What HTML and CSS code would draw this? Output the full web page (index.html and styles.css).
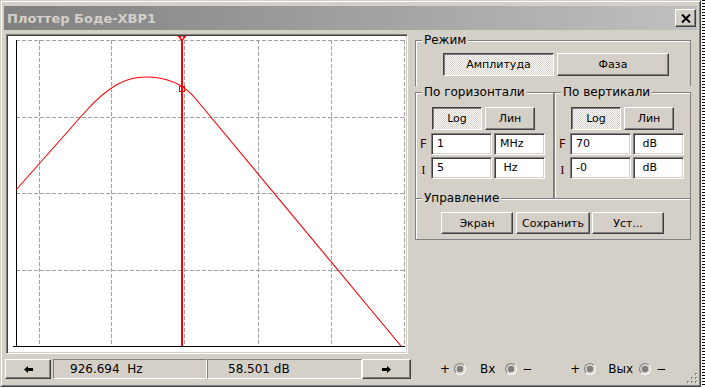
FILE: index.html
```html
<!DOCTYPE html>
<html lang="ru">

<head>
  <meta charset="UTF-8">
  <title>Плоттер Боде-XBP1</title>
  <link rel="stylesheet" href="styles.css">
</head>

<body>
  <div class="window">
    <div class="titlebar">
      <span class="title">Плоттер Боде-XBP1</span>
      <button class="close" type="button" aria-label="Закрыть">
        <svg width="10" height="9" viewBox="0 0 10 9"><path d="M1 0.5 L9 8.5 M9 0.5 L1 8.5" stroke="#000" stroke-width="2"/></svg>
      </button>
    </div>

    <div class="content">
      <div class="left">
        <!-- график АЧХ -->
        <div class="plot">
          <svg class="chart" viewBox="8 36 398 316" width="398" height="316">
            <g class="grid">
              <line x1="16" y1="40.5" x2="405" y2="40.5"/>
              <line x1="16" y1="117.5" x2="405" y2="117.5"/>
              <line x1="16" y1="193.5" x2="405" y2="193.5"/>
              <line x1="16" y1="270.5" x2="405" y2="270.5"/>
              <line x1="39.5" y1="40" x2="39.5" y2="346"/>
              <line x1="111.5" y1="40" x2="111.5" y2="346"/>
              <line x1="184.5" y1="40" x2="184.5" y2="346"/>
              <line x1="258.5" y1="40" x2="258.5" y2="346"/>
              <line x1="331.5" y1="40" x2="331.5" y2="346"/>
              <line x1="404.5" y1="40" x2="404.5" y2="346"/>
            </g>
            <path class="axis" d="M16.5 40 V347 M13 346.5 H405"/>
            <path class="curve" d="M16 190 L85 112 C110 84 128 77 145 77 C162 77 181 81 195 98 L401 346"/>
            <line class="cursor" x1="182" y1="36" x2="182" y2="346"/>
            <polygon class="marker" points="177.5,36 186.5,36 182,41.5"/>
            <circle cx="182" cy="37.5" r="1.3" fill="#fff"/>
            <rect class="probe" x="179.5" y="86.5" width="5" height="5"/>
          </svg>
        </div>

        <div class="readout">
          <button class="btn arrow arrow-left" type="button">
            <svg width="9" height="7" viewBox="0 0 9 7"><path d="M0 3.5 L4 0 V2 H9 V5 H4 V7 Z"/></svg>
          </button>
          <div class="field field-freq">926.694  Hz</div>
          <div class="field field-gain">58.501 dB</div>
          <button class="btn arrow arrow-right" type="button">
            <svg width="9" height="7" viewBox="0 0 9 7"><path d="M9 3.5 L5 0 V2 H0 V5 H5 V7 Z"/></svg>
          </button>
        </div>
      </div>

      <div class="right">
        <fieldset class="group mode">
          <legend>Режим</legend>
          <div class="btnrow">
            <button class="btn pressed wide" type="button">Амплитуда</button>
            <button class="btn wide wide-2" type="button">Фаза</button>
          </div>
        </fieldset>

        <div class="axes">
          <fieldset class="group axis-group axis-h">
            <legend>По горизонтали</legend>
            <div class="toggles">
              <button class="btn pressed small" type="button">Log</button>
              <button class="btn small" type="button">Лин</button>
            </div>
            <div class="row">
              <span class="tag">F</span>
              <input class="num" type="text" value="1">
              <input class="unit" type="text" value="MHz">
            </div>
            <div class="row row-2">
              <span class="tag tag-i">I</span>
              <input class="num" type="text" value="5">
              <input class="unit" type="text" value=" Hz">
            </div>
          </fieldset>

          <fieldset class="group axis-group axis-v">
            <legend>По вертикали</legend>
            <div class="toggles">
              <button class="btn pressed small" type="button">Log</button>
              <button class="btn small" type="button">Лин</button>
            </div>
            <div class="row">
              <span class="tag">F</span>
              <input class="num" type="text" value="70">
              <input class="unit" type="text" value=" dB">
            </div>
            <div class="row row-2">
              <span class="tag tag-i">I</span>
              <input class="num" type="text" value="-0">
              <input class="unit" type="text" value=" dB">
            </div>
          </fieldset>
        </div>

        <fieldset class="group control">
          <legend>Управление</legend>
          <div class="btnrow">
            <button class="btn ctl" type="button">Экран</button>
            <button class="btn ctl ctl-save" type="button">Сохранить</button>
            <button class="btn ctl ctl-set" type="button">Уст...</button>
          </div>
        </fieldset>

        <div class="terminals">
          <div class="term term-in">
            <span class="sign">+</span>
            <span class="radio"></span>
            <span class="tname">Вх</span>
            <span class="radio"></span>
            <span class="sign">−</span>
          </div>
          <div class="term term-out">
            <span class="sign">+</span>
            <span class="radio"></span>
            <span class="tname">Вых</span>
            <span class="radio"></span>
            <span class="sign">−</span>
          </div>
        </div>
      </div>
    </div>

    <svg class="grip" width="11" height="11" viewBox="0 0 11 11">
      <g fill="#808080">
        <rect x="8" y="0" width="2" height="2"/>
        <rect x="4" y="4" width="2" height="2"/>
        <rect x="8" y="4" width="2" height="2"/>
        <rect x="0" y="8" width="2" height="2"/>
        <rect x="4" y="8" width="2" height="2"/>
        <rect x="8" y="8" width="2" height="2"/>
      </g>
      <g fill="#fff">
        <rect x="9" y="1" width="1" height="1"/>
        <rect x="5" y="5" width="1" height="1"/>
        <rect x="9" y="5" width="1" height="1"/>
        <rect x="1" y="9" width="1" height="1"/>
        <rect x="5" y="9" width="1" height="1"/>
        <rect x="9" y="9" width="1" height="1"/>
      </g>
    </svg>
  </div>
</body>

</html>
```

FILE: styles.css
```css
* {
  box-sizing: border-box;
}

body {
  margin: 0;
  font-family: 'DejaVu Sans', sans-serif;
  font-size: 11px;
  color: #000;
  background: repeating-linear-gradient(#000 0 1px, #fff 1px 3px) right top / 3px 100% no-repeat, #fff;
}

button,
input {
  font: inherit;
  color: inherit;
}

/* Окно */
.window {
  position: relative;
  width: 701px;
  height: 387px;
  padding: 5px 3px 0 3px;
  display: flex;
  flex-direction: column;
  background-color: #d4d0c8;
  border: 1px solid;
  border-color: #d4d0c8 #404040 #404040 #d4d0c8;
  box-shadow: inset 1px 1px #fff, inset -1px -1px #808080;
}

.titlebar {
  height: 24px;
  flex: none;
  display: flex;
  align-items: center;
  justify-content: space-between;
  padding: 0 1px 0 3px;
  background: linear-gradient(to right, #808080, #c0c0c0);
}

.title {
  color: #d4d0c8;
  font-weight: bold;
  font-size: 13px;
}

.close {
  width: 21px;
  height: 18px;
  padding: 0;
  display: flex;
  align-items: center;
  justify-content: center;
  background-color: #d4d0c8;
  border: 1px solid;
  border-color: #fff #404040 #404040 #fff;
  box-shadow: inset -1px -1px #808080;
}

.content {
  flex: 1;
  display: flex;
  padding: 4px 0 0 1px;
}

/* Левая часть: график */
.left {
  width: 406px;
  flex: none;
}

.plot {
  margin-left: 1px;
  width: 402px;
  height: 320px;
  padding: 1px;
  background-color: #fff;
  border: 1px solid;
  border-color: #808080 #fff #fff #808080;
  box-shadow: inset 1px 1px #404040, inset -1px -1px #d4d0c8;
}

.chart {
  display: block;
}

.grid line {
  stroke: #a0a0a0;
  stroke-width: 1;
  stroke-dasharray: 4 2;
}

.axis {
  fill: none;
  stroke: #000;
  stroke-width: 1;
}

.curve {
  fill: none;
  stroke: #f00;
  stroke-width: 1.1;
}

.cursor {
  stroke: #f00;
  stroke-width: 2;
}

.marker {
  fill: #f00;
}

.probe {
  fill: none;
  stroke: #f00;
  stroke-width: 1;
}

.readout {
  margin-top: 5px;
  height: 20px;
  display: flex;
}

.field {
  height: 20px;
  line-height: 18px;
  font-size: 12px;
  white-space: pre;
  border: 1px solid;
  border-color: #808080 #fff #fff #808080;
}

.field-freq {
  width: 154px;
  margin-left: 2px;
  padding-left: 16px;
}

.field-gain {
  width: 155px;
  padding-left: 20px;
}

/* Кнопки */
.btn {
  padding: 0;
  background-color: #d4d0c8;
  border: 1px solid;
  border-color: #fff #404040 #404040 #fff;
  box-shadow: inset -1px -1px #808080;
  cursor: pointer;
}

.btn.pressed {
  border-color: #404040 #fff #fff #404040;
  box-shadow: inset 1px 1px #808080;
  background: repeating-conic-gradient(#fff 0 25%, #d4d0c8 0 50%) 0 0 / 2px 2px;
}

.btnrow {
  display: flex;
}

.arrow {
  height: 20px;
  display: flex;
  align-items: center;
  justify-content: center;
}

.arrow-left {
  width: 46px;
}

.arrow-right {
  width: 49px;
}

.wide {
  width: 111px;
  height: 23px;
}

.wide-2 {
  width: 112px;
  margin-left: 3px;
}

.small {
  width: 50px;
  height: 23px;
}

.ctl {
  width: 72px;
  height: 22px;
}

.ctl-save {
  width: 74px;
  margin-left: 3px;
}

.ctl-set {
  margin-left: 2px;
}

/* Правая часть: настройки */
.right {
  width: 276px;
  margin-left: 4px;
  display: flex;
  flex-direction: column;
}

.group {
  margin: 0;
  padding: 0;
  min-width: 0;
  border: 1px solid #808080;
  box-shadow: inset 1px 1px #fff;
}

.group legend {
  margin-left: 6px;
  padding: 0 2px;
  line-height: 13px;
  font-size: 12px;
  background-color: #d4d0c8;
}

.mode {
  border-bottom: none;
  padding: 6px 0 10px 0;
}

.mode .btnrow {
  margin-left: 27px;
}

.axes {
  display: flex;
}

.axis-group {
  border-bottom: none;
  padding: 8px 0 19px 0;
}

.axis-h {
  width: 139px;
}

.axis-v {
  flex: 1;
}

.toggles {
  display: flex;
  gap: 3px;
  margin-left: 16px;
}

.row {
  display: flex;
  align-items: center;
  height: 22px;
  margin-top: 3px;
}

.row-2 {
  margin-top: 2px;
}

.tag {
  width: 15px;
  text-align: center;
  font-size: 12px;
  color: #400000;
}

.tag-i {
  font-family: 'Liberation Serif', serif;
  font-size: 13px;
  padding-top: 4px;
}

.num,
.unit {
  height: 22px;
  padding: 0 0 2px 5px;
  white-space: pre;
  background-color: #fff;
  border: 1px solid;
  border-color: #808080 #fff #fff #808080;
  box-shadow: inset 1px 1px #404040, inset -1px -1px #d4d0c8;
  outline: none;
}

.num {
  width: 61px;
}

.unit {
  width: 51px;
  margin-left: 2px;
}

.control {
  margin-top: -6px;
  padding: 7px 0 5px 0;
}

.control .btnrow {
  margin-left: 25px;
}

/* Клеммы */
.terminals {
  margin-top: auto;
  margin-bottom: 7px;
  height: 20px;
  display: flex;
  align-items: center;
  padding-left: 25px;
  font-size: 12px;
}

.term {
  display: flex;
  align-items: center;
}

.term-out {
  margin-left: 39px;
}

.sign {
  width: 9px;
  text-align: center;
}

.radio {
  width: 12px;
  height: 12px;
  margin: 0 5px;
  border-radius: 50%;
  border: 1px solid;
  border-color: #808080 #fff #fff #808080;
  background: radial-gradient(circle, #808080 0 3px, #d4d0c8 3.5px);
}

.tname {
  margin: 0 5px 0 9px;
}

.term-out .tname {
  margin: 0 1px 0 7px;
}

.grip {
  position: absolute;
  right: 2px;
  bottom: 2px;
}
```
